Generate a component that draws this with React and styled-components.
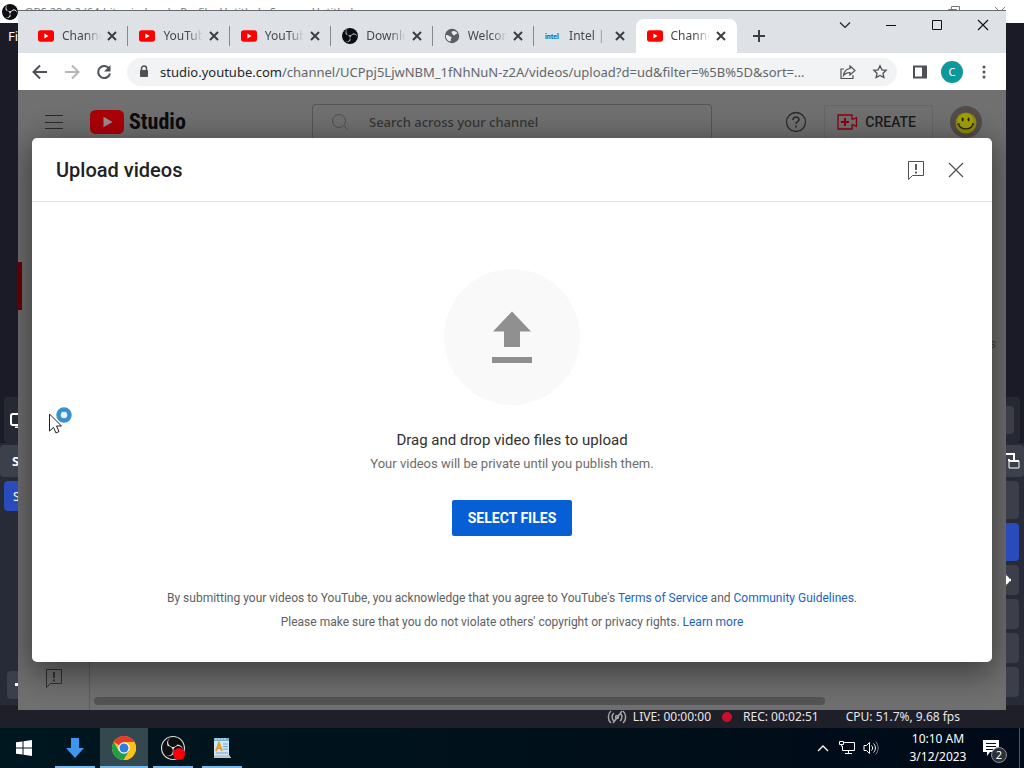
import React, { useState } from "react";
import styled, { createGlobalStyle } from "styled-components";
import { SiObsstudio } from "react-icons/si";

const GlobalStyle = createGlobalStyle`
  * {
    box-sizing: border-box;
  }
  body {
    margin: 0;
    overflow: hidden;
    font-family: "Noto Sans", "Open Sans", sans-serif;
  }
  button {
    padding: 0;
    border: none;
    background: none;
    color: inherit;
    font-family: inherit;
  }
  svg {
    display: block;
    flex: none;
  }
`;

/* ---------- desktop ---------- */

const Desktop = styled.div`
  display: flex;
  flex-direction: column;
  height: 100vh;
`;

const Workspace = styled.div`
  position: relative;
  flex: 1;
  min-height: 0;
  display: flex;
  flex-direction: column;
  overflow: hidden;
  background: #1a1b26;
`;

/* ---------- OBS window ---------- */

const ObsTitle = styled.div`
  display: flex;
  align-items: center;
  gap: 7px;
  height: 23px;
  padding: 0 18px 0 2px;
  background: #fff;
  color: #777;
  font-size: 11px;
  white-space: nowrap;
`;

const ObsTitleButtons = styled.div`
  display: flex;
  gap: 34px;
  margin-left: auto;
`;

const ObsMenu = styled.div`
  height: 26px;
  padding-left: 8px;
  color: #fff;
  font-size: 13px;
  line-height: 26px;
`;

const ObsPreview = styled.div`
  flex: 1;
`;

const ObsToolbar = styled.div`
  display: flex;
  align-items: center;
  justify-content: space-between;
  height: 46px;
  margin: 0 4px;
  padding: 0 6px;
  border-radius: 4px;
  background: #272932;
`;

const ObsToolButton = styled.div`
  width: 80px;
  height: 28px;
  border-radius: 4px;
  background: #3c3d47;
`;

const ObsDocks = styled.div`
  display: flex;
  justify-content: space-between;
  height: 262px;
  background: #272a37;
`;

const ObsDock = styled.div`
  display: flex;
  flex-direction: column;
  width: 200px;
`;

const ObsDockTitle = styled.div`
  display: flex;
  align-items: center;
  justify-content: ${props => (props.$end ? "flex-end" : "flex-start")};
  height: 32px;
  margin-top: 2px;
  padding: 0 4px 0 12px;
  border-radius: 4px;
  background: #3c404b;
  color: #fff;
  font-size: 13px;
  font-weight: 700;
`;

const ObsDockBody = styled.div`
  display: flex;
  flex-direction: column;
  gap: 4px;
  flex: 1;
  padding: 4px 5px 6px 4px;
`;

const ObsRow = styled.div`
  display: flex;
  align-items: center;
  justify-content: ${props => (props.$end ? "flex-end" : "flex-start")};
  height: ${props => (props.$tall ? 38 : 30)}px;
  padding-left: 9px;
  padding-right: 8px;
  border-radius: 4px;
  background: ${props => (props.$active ? "#2a4bbb" : "#3c3e4a")};
  color: #fff;
  font-size: 12px;
`;

const ObsDockFooter = styled.div`
  height: 28px;
  margin: auto 0 0 3px;
  padding: 12px 8px;
  border-radius: 4px;
  background: #3c3e4a;
`;

const ObsStatus = styled.div`
  display: flex;
  align-items: center;
  justify-content: flex-end;
  height: 23px;
  padding-right: 64px;
  background: #1e1f29;
  color: #e6e6e8;
  font-size: 12px;
  line-height: 22px;
`;

const StatusItem = styled.span`
  display: flex;
  align-items: center;
  gap: ${props => props.$gap || 6}px;
  margin-left: ${props => props.$space || 0}px;
`;

const RecDot = styled.i`
  width: 10px;
  height: 10px;
  border-radius: 50%;
  background: #c8102e;
`;

/* ---------- browser window ---------- */

const Browser = styled.section`
  position: absolute;
  inset: 10px 18px 18px 18px;
  display: flex;
  flex-direction: column;
  border-top: 1px solid #6a6b6e;
`;

const TabStrip = styled.div`
  display: flex;
  align-items: flex-end;
  height: 42px;
  padding-left: 9px;
  background: #dee1e6;
`;

const TabList = styled.div`
  display: flex;
  flex: 0 1 710px;
  min-width: 0;
`;

const Tab = styled.div`
  position: relative;
  display: flex;
  align-items: center;
  flex: 1 1 0;
  min-width: 0;
  height: 34px;
  padding: 0 8px 0 11px;
  border-radius: 8px 8px 0 0;
  background: ${props => (props.$active ? "#fff" : "transparent")};

  &:after {
    content: "";
    position: absolute;
    right: 0;
    top: 7px;
    width: 1px;
    height: 20px;
    background: ${props => (props.$divider ? "#85888c" : "transparent")};
  }
`;

const TabTitle = styled.span`
  flex: 1;
  min-width: 0;
  overflow: hidden;
  margin: 0 3px 0 8px;
  color: #45494d;
  font-size: 12px;
  line-height: 20px;
  white-space: nowrap;
  mask-image: linear-gradient(to right, #000 60%, transparent 100%);
`;

const IconButton = styled.button`
  display: flex;
  align-items: center;
  justify-content: center;
  flex: none;
  width: ${props => props.$w || 32}px;
  height: ${props => props.$h || 28}px;
  color: ${props => props.$color || "#4d5156"};
`;

const WindowButtons = styled.div`
  display: flex;
  align-self: flex-start;
  margin-left: auto;
`;

const Toolbar = styled.div`
  display: flex;
  align-items: center;
  height: 37px;
  padding: 0 6px;
  background: #fff;
`;

const AddressBar = styled.div`
  display: flex;
  align-items: center;
  flex: 1;
  min-width: 0;
  height: 28px;
  margin: 0 7px;
  padding: 0 1px 0 11px;
  border-radius: 14px;
  background: #f1f3f4;
`;

const Address = styled.div`
  flex: 1;
  min-width: 0;
  margin-left: 10px;
  color: #63676b;
  font-size: 13px;
  line-height: 20px;
  overflow: hidden;
  white-space: nowrap;

  b {
    color: #25282b;
    font-weight: 400;
  }
`;

const Profile = styled.button`
  width: 22px;
  height: 22px;
  margin: 0 5px;
  border-radius: 50%;
  background: #0d989c;
  color: #fff;
  font-size: 11px;
  line-height: 22px;
`;

/* ---------- studio page ---------- */

const Page = styled.main`
  position: relative;
  flex: 1;
  min-height: 0;
  display: flex;
  flex-direction: column;
  overflow: hidden;
  background: #707070;
  font-family: Roboto, sans-serif;
`;

const Header = styled.header`
  display: flex;
  align-items: center;
  height: 64px;
  padding: 0 24px 0 27px;
`;

const Logo = styled.a`
  display: flex;
  align-items: center;
  gap: 5px;
  width: 98px;
  margin-left: 27px;
  color: #0b0b0b;
  font-family: "Roboto Condensed", "Open Sans Condensed", Roboto, sans-serif;
  font-size: 22px;
  font-weight: 700;
  line-height: 28px;
  text-decoration: none;
`;

const Search = styled.label`
  display: flex;
  align-items: center;
  gap: 18px;
  flex: 0 1 400px;
  height: 36px;
  margin: 0 auto 0 124px;
  padding: 0 18px;
  border: 1px solid #565656;
  border-radius: 3px;
  color: #505050;

  input {
    flex: 1;
    min-width: 0;
    border: none;
    outline: none;
    background: none;
    font-family: "Noto Sans", sans-serif;
    font-size: 13px;
    font-weight: 500;
  }
  input::placeholder {
    color: #363636;
    opacity: 1;
  }
`;

const CreateButton = styled.button`
  display: flex;
  align-items: center;
  gap: 7px;
  height: 34px;
  margin: 0 17px;
  padding: 0 16px 0 12px;
  border: 1px solid #666;
  border-radius: 2px;
  color: #1c1c1c;
  font-size: 14px;
  font-weight: 500;
`;

const PageBody = styled.div`
  display: flex;
  flex: 1;
`;

const Sidebar = styled.nav`
  display: flex;
  flex-direction: column;
  justify-content: space-between;
  width: 72px;
  padding: 108px 0 22px;
  border-right: 1px solid #5d5d5d;
`;

const ActiveMark = styled.div`
  width: 4px;
  height: 48px;
  background: #6d0007;
`;

const SidebarIcon = styled.div`
  padding-left: 27px;
  color: #303030;
`;

const Content = styled.div`
  flex: 1;
  display: flex;
  flex-direction: column;
  justify-content: space-between;
  padding: 182px 10px 5px 4px;
  color: #444;
  font-size: 13px;
  line-height: 16px;
  text-align: right;
`;

const ScrollThumb = styled.div`
  width: 81%;
  height: 8px;
  border-radius: 4px;
  background: #545454;
`;

/* ---------- upload dialog ---------- */

const Dialog = styled.div`
  position: absolute;
  inset: 48px 14px;
  display: flex;
  flex-direction: column;
  border-radius: 5px;
  background: #fff;
  box-shadow: 0 8px 32px 4px rgba(0, 0, 0, 0.45);
`;

const DialogHeader = styled.div`
  display: flex;
  align-items: center;
  height: 64px;
  padding: 0 16px 0 24px;
  border-bottom: 1px solid #e3e3e3;

  h1 {
    flex: 1;
    margin: 0;
    color: #212121;
    font-size: 20px;
    font-weight: 500;
    line-height: 28px;
  }
`;

const DropArea = styled.div`
  display: flex;
  flex-direction: column;
  align-items: center;
  flex: 1;
  padding-top: 67px;
`;

const UploadCircle = styled.div`
  display: flex;
  align-items: center;
  justify-content: center;
  width: 136px;
  height: 136px;
  margin-bottom: 23px;
  border-radius: 50%;
  background: #f9f9f9;
`;

const DropTitle = styled.p`
  margin: 0;
  color: #303030;
  font-size: 15px;
  line-height: 24px;
`;

const DropText = styled.p`
  margin: 0 0 24px;
  color: #6c6c6c;
  font-size: 13px;
  line-height: 24px;
`;

const SelectButton = styled.button`
  height: 36px;
  padding: 0 16px;
  border-radius: 2px;
  background: #065fd4;
  color: #fff;
  font-size: 14px;
  font-weight: 700;
`;

const Legal = styled.div`
  padding-bottom: 28px;
  color: #606060;
  font-size: 12px;
  line-height: 24px;
  text-align: center;

  p {
    margin: 0;
  }
  a {
    color: #1a63c6;
    text-decoration: none;
  }
`;

/* ---------- taskbar ---------- */

const Taskbar = styled.footer`
  display: flex;
  height: 40px;
  background: linear-gradient(to right, #001720, #00121c 40%, #000a18);
  color: #fff;
`;

const TaskButton = styled.button`
  display: flex;
  align-items: center;
  justify-content: center;
  position: relative;
  width: 48px;
  margin-right: ${props => (props.$start ? 3 : 1)}px;
  background: ${props => (props.$active ? "#34484f" : "transparent")};

  &:after {
    content: "";
    position: absolute;
    bottom: 0;
    left: ${props => (props.$active ? 0 : 4)}px;
    right: ${props => (props.$active ? 0 : 4)}px;
    height: 2px;
    background: ${props => (props.$start ? "transparent" : "#76b9ed")};
  }
`;

const Tray = styled.div`
  display: flex;
  align-items: center;
  margin-left: auto;
`;

const Clock = styled.div`
  width: 74px;
  margin-left: 18px;
  font-size: 12px;
  line-height: 18px;
  text-align: center;
`;

const Notifications = styled.button`
  position: relative;
  display: flex;
  align-items: flex-start;
  width: 34px;
  height: 40px;
  padding: 12px 0 0 8px;
`;

const Badge = styled.span`
  position: absolute;
  right: 2px;
  bottom: 5px;
  width: 16px;
  height: 16px;
  border: 1px solid #8b9096;
  border-radius: 50%;
  background: #2a3038;
  font-size: 11px;
  line-height: 14px;
  text-align: center;
`;

const ShowDesktop = styled.div`
  width: 5px;
  height: 40px;
  margin-left: 10px;
  border-left: 1px solid #50565f;
`;

const Pointer = styled.div`
  position: absolute;
  top: 403px;
  left: 47px;
  pointer-events: none;
`;

/* ---------- icons ---------- */

const ObsDisc = styled.span`
  position: relative;
  display: flex;
  align-items: center;
  justify-content: center;
  flex: none;
  width: ${props => props.$size}px;
  height: ${props => props.$size}px;
  overflow: ${props => (props.$clip ? "hidden" : "visible")};
  border-radius: 50%;
  background: #0d0e12;
  color: ${props => props.$color};
`;

const RecordingDot = styled.i`
  position: absolute;
  right: 0;
  bottom: 0;
  width: 12px;
  height: 12px;
  border-radius: 50%;
  background: #fb0007;
`;

const ObsIcon = ({ size = 16, inner = 18, color = "#c8c8c8", dot }) => (
  <ObsDisc $size={size} $color={color} $clip={!dot}>
    <SiObsstudio size={inner} />
    {dot && <RecordingDot />}
  </ObsDisc>
);

const YouTubeIcon = ({ width = 16, height = 12, fill = "#f00", play = "#fff" }) => (
  <svg width={width} height={height} viewBox="0 0 34 24">
    <rect width="34" height="24" rx="5.5" fill={fill} />
    <path d="M13.5 6.8v10.4l9-5.2z" fill={play} />
  </svg>
);

const GlobeIcon = () => (
  <svg width="16" height="16" viewBox="0 0 16 16">
    <circle cx="8" cy="8" r="7.2" fill="#5b5f63" />
    <path
      d="M1.800 7.200c1.700-.3 2.700.2 3.600 1 .9.500 2 .3 2.200 1.200.1.900-1 1.200-.8 2.400l.1 1.500C4 13.200 1.600 11 1.800 7.200zM8.500 3.200c1.900-.9 4.200.3 5 2.300l-1.700.6c-.6.9-1.700 1.600-2.700 1.100-.7-.4-.2-1.300-.9-1.700-.9-.5-.8-1.700.3-2.300z"
      fill="#e8eaed"
    />
  </svg>
);

const IntelLogo = () => (
  <svg width="16" height="16" viewBox="0 0 16 16">
    <text x="0" y="11" fill="#0068b5" fontFamily="Lato, sans-serif" fontSize="7" fontWeight="900">
      intel
    </text>
  </svg>
);

const Cross = ({ size = 16, inset = 4, weight = 2 }) => (
  <svg width={size} height={size} viewBox={`0 0 ${size} ${size}`} stroke="currentColor" strokeWidth={weight}>
    <path d={`M${inset} ${inset}L${size - inset} ${size - inset}M${size - inset} ${inset}L${inset} ${size - inset}`} />
  </svg>
);

const LineIcon = ({ size = 16, d, weight = 1, children }) => (
  <svg
    width={size}
    height={size}
    viewBox={`0 0 ${size} ${size}`}
    fill="none"
    stroke="currentColor"
    strokeWidth={weight}
  >
    {d && <path d={d} />}
    {children}
  </svg>
);

const FeedbackIcon = () => (
  <svg width="18" height="20" viewBox="0 0 18 20" fill="none" stroke="currentColor">
    <path d="M1.500 1.500h15v14h-11l-4 4z" />
    <path d="M9 4v6M9 11.500v2" strokeWidth="1.800" />
  </svg>
);

const SmileyAvatar = () => (
  <svg width="32" height="32" viewBox="0 0 32 32">
    <circle cx="16" cy="16" r="16" fill="#544c4b" />
    <circle cx="16" cy="17" r="10.5" fill="#8f8c0c" />
    <circle cx="15.500" cy="15.500" r="8" fill="#a3a00a" />
    <ellipse cx="12.600" cy="13.500" rx="1" ry="2" fill="#222005" />
    <ellipse cx="18.600" cy="13.500" rx="1" ry="2" fill="#222005" />
    <path d="M8.500 18c2 6.500 12.500 6.500 14.500 0M7.500 18.500l2-1M22 17.500l2 1" fill="none" stroke="#222005" strokeWidth="1.200" />
  </svg>
);

const ChromeIcon = () => (
  <svg width="24" height="24" viewBox="0 0 24 24">
    <circle cx="12" cy="12" r="12" fill="#fbc116" />
    <path d="M12 12L1.600 6A12 12 0 0 1 22.400 6H12z" fill="#e33b2e" />
    <path d="M1.600 6A12 12 0 0 0 11.500 24l5.700-9L12 12l-5.200 3z" fill="#1f9d4d" />
    <path d="M22.400 6H12v6l5.200 3-5.500 9A12 12 0 0 0 22.400 6z" fill="#fbc116" />
    <circle cx="12" cy="12" r="5.800" fill="#fff" />
    <circle cx="12" cy="12" r="4.500" fill="#2f7be0" />
  </svg>
);

const NotepadIcon = () => (
  <svg width="20" height="22" viewBox="0 0 20 22">
    <path d="M2 1h15v17l2 3H2z" fill="#d3e6f2" />
    <path d="M2 1h15v3H2z" fill="#6fb1d6" />
    <path d="M4 1v2M7 1v2M10 1v2M13 1v2" stroke="#d9edf7" />
    <path d="M4 14L7 6l3 8M5 11h4" fill="none" stroke="#e59a32" strokeWidth="2" />
    <path d="M11 7h5M11 9.500h5M11 12h5M4 16h12" stroke="#6aa5cf" />
    <path d="M2 18h15l2 3H2z" fill="#b9c8d1" />
  </svg>
);

const tabs = [
  { title: "Channel content", icon: <YouTubeIcon /> },
  { title: "YouTube", icon: <YouTubeIcon /> },
  { title: "YouTube", icon: <YouTubeIcon /> },
  { title: "Download", icon: <ObsIcon /> },
  { title: "Welcome", icon: <GlobeIcon /> },
  { title: "Intel | Data", icon: <IntelLogo /> },
  { title: "Channel content", icon: <YouTubeIcon />, active: true }
];

const ObsWindow = () => (
  <>
    <ObsTitle>
      <ObsIcon color="#fff" />
      <span>OBS 29.0.2 (64-bit, windows) - Profile: Untitled - Scenes: Untitled</span>
      <ObsTitleButtons>
        <LineIcon size={12} d="M3.5 3V.5h8v8H9M.5 3.500h8v8h-8z" />
        <Cross size={12} inset={1} weight={1} />
      </ObsTitleButtons>
    </ObsTitle>
    <ObsMenu>File</ObsMenu>
    <ObsPreview />
    <ObsToolbar>
      <svg width="16" height="16" viewBox="0 0 16 16" fill="none" stroke="#fff" strokeWidth="2">
        <rect x="1" y="2" width="14" height="11" rx="2" />
        <path d="M5 15.500h6" />
      </svg>
      <ObsToolButton />
    </ObsToolbar>
    <ObsDocks>
      <ObsDock>
        <ObsDockTitle>Scenes</ObsDockTitle>
        <ObsDockBody>
          <ObsRow $active>Scene</ObsRow>
          <ObsDockFooter>
            <svg width="10" height="3" viewBox="0 0 10 3">
              <path d="M0 0h10v3H0z" fill="#fff" />
            </svg>
          </ObsDockFooter>
        </ObsDockBody>
      </ObsDock>
      <ObsDock>
        <ObsDockTitle $end>
          <svg width="18" height="16" viewBox="0 0 18 16" fill="none" stroke="#fff">
            <path d="M7 8V6M1 1h11v6" strokeWidth="2" />
            <path d="M7 8h10v7H7z" />
            <path d="M7 8h10" strokeWidth="2" />
          </svg>
        </ObsDockTitle>
        <ObsDockBody>
          <ObsRow $tall />
          <ObsRow $tall $active />
          <ObsRow $end>
            <svg width="12" height="12" viewBox="0 0 12 12">
              <circle cx="6" cy="6" r="3" fill="none" stroke="#fff" strokeWidth="3" />
              <path d="M6 0v12M0 6h12" stroke="#fff" strokeWidth="2.500" />
            </svg>
          </ObsRow>
          <ObsRow />
          <ObsRow />
          <ObsRow />
        </ObsDockBody>
      </ObsDock>
    </ObsDocks>
    <ObsStatus>
      <StatusItem>
        <svg width="20" height="14" viewBox="0 0 20 14" fill="none" stroke="#a4a5aa" strokeWidth="1.500">
          <path d="M4 1C.5 4 .5 10 4 13M7 3C4.500 5 4.500 9 7 11M16 1c3.500 3 3.500 9 0 12M13 3c2.500 2 2.500 6 0 8M6 13L15 1" />
          <circle cx="10" cy="7" r="1.500" />
        </svg>
        LIVE: 00:00:00
      </StatusItem>
      <StatusItem $space={11} $gap={11}>
        <RecDot />
        REC: 00:02:51
      </StatusItem>
      <StatusItem $space={27}>CPU: 51.7%, 9.68 fps</StatusItem>
    </ObsStatus>
  </>
);

const UploadDialog = () => (
  <Dialog role="dialog" aria-labelledby="upload-title">
    <DialogHeader>
      <h1 id="upload-title">Upload videos</h1>
      <IconButton $w={40} $color="#505050" aria-label="Send feedback">
        <FeedbackIcon />
      </IconButton>
      <IconButton $w={40} $color="#505050" aria-label="Close">
        <Cross size={18} inset={2} weight={1.2} />
      </IconButton>
    </DialogHeader>
    <DropArea>
      <UploadCircle>
        <svg width="40" height="52" viewBox="0 0 40 52" fill="#909090">
          <path d="M20 .500l19 20H28V36H12V20.500H1zM0 46h40v6H0z" />
        </svg>
      </UploadCircle>
      <DropTitle>Drag and drop video files to upload</DropTitle>
      <DropText>Your videos will be private until you publish them.</DropText>
      <SelectButton>SELECT FILES</SelectButton>
    </DropArea>
    <Legal>
      <p>
        By submitting your videos to YouTube, you acknowledge that you agree to
        YouTube's <a href="#terms">Terms of Service</a> and{" "}
        <a href="#guidelines">Community Guidelines</a>.
      </p>
      <p>
        Please make sure that you do not violate others' copyright or privacy
        rights. <a href="#learn">Learn more</a>
      </p>
    </Legal>
  </Dialog>
);

const StudioPage = () => {
  const [query, setQuery] = useState("");

  return (
    <Page>
      <Header>
        <IconButton $w={18} $color="#2b2b2b" aria-label="Menu">
          <LineIcon size={18} d="M0 2.500h18M0 9.500h18M0 15.500h18" />
        </IconButton>
        <Logo href="#studio">
          <YouTubeIcon width={34} height={24} fill="#ac0009" play="#9a8f8f" />
          Studio
        </Logo>
        <Search>
          <LineIcon size={18} d="M12.500 12.500L17 17">
            <circle cx="8" cy="8" r="6.500" />
          </LineIcon>
          <input
            type="text"
            aria-label="Search"
            placeholder="Search across your channel"
            value={query}
            onChange={e => setQuery(e.target.value)}
          />
        </Search>
        <IconButton $w={22} $color="#2c2c2c" aria-label="Help">
          <LineIcon size={22} weight={1.3}>
            <circle cx="11" cy="11" r="9.500" />
            <path d="M8 9c0-4 6-4 6-.500 0 2.200-3 2.200-3 4.500M11 14.500v2" strokeWidth="1.600" />
          </LineIcon>
        </IconButton>
        <CreateButton>
          <svg width="21" height="16" viewBox="0 0 21 16" fill="none" stroke="#8a0010">
            <path d="M1 1h14v4h1.500l3-1.500v9l-3-1.500H15v4H1z" strokeWidth="1.300" />
            <path d="M8 4v8M4 8h8" strokeWidth="2" />
          </svg>
          CREATE
        </CreateButton>
        <SmileyAvatar />
      </Header>
      <PageBody>
        <Sidebar>
          <ActiveMark />
          <SidebarIcon>
            <FeedbackIcon />
          </SidebarIcon>
        </Sidebar>
        <Content>
          <span>s</span>
          <ScrollThumb />
        </Content>
      </PageBody>
      <UploadDialog />
    </Page>
  );
};

const BrowserWindow = () => (
  <Browser>
    <TabStrip>
      <TabList>
        {tabs.map((tab, i) => (
          <Tab key={i} $active={tab.active} $divider={i < 5}>
            {tab.icon}
            <TabTitle>{tab.title}</TabTitle>
            <IconButton $w={16} $h={16} $color="#3c4043" aria-label="Close tab">
              <Cross />
            </IconButton>
          </Tab>
        ))}
      </TabList>
      <IconButton $w={44} $h={34} $color="#3c4043" aria-label="New tab">
        <LineIcon size={12} weight={2} d="M6 0v12M0 6h12" />
      </IconButton>
      <WindowButtons>
        <IconButton $w={46} $color="#222" aria-label="Search tabs">
          <LineIcon size={12} d="M1 3.500l5 5 5-5" weight={1.2} />
        </IconButton>
        <IconButton $w={46} $color="#111" aria-label="Minimize">
          <LineIcon size={10} d="M0 5.500h10" />
        </IconButton>
        <IconButton $w={46} $color="#111" aria-label="Maximize">
          <LineIcon size={10} d="M.5.5h9v9h-9z" />
        </IconButton>
        <IconButton $w={46} $color="#111" aria-label="Close window">
          <Cross size={12} inset={1} weight={1.1} />
        </IconButton>
      </WindowButtons>
    </TabStrip>
    <Toolbar>
      <IconButton aria-label="Back">
        <LineIcon weight={2} d="M15 8H2M8 1.500L1.500 8 8 14.500" />
      </IconButton>
      <IconButton $color="#b4b6b9" aria-label="Forward">
        <LineIcon weight={2} d="M1 8h13M8 1.500L14.500 8 8 14.500" />
      </IconButton>
      <IconButton aria-label="Reload">
        <LineIcon weight={2} d="M13 4.500A6 6 0 1 0 14 9.500">
          <path d="M14.500 1v6.500H8z" fill="currentColor" stroke="none" />
        </LineIcon>
      </IconButton>
      <AddressBar>
        <svg width="12" height="14" viewBox="0 0 12 14">
          <rect x="2" y="5" width="8" height="7" rx="1" fill="#4d5156" />
          <path d="M3.500 5.500v-2a2.500 2.500 0 0 1 5 0v2" fill="none" stroke="#4d5156" strokeWidth="1.500" />
        </svg>
        <Address>
          <b>studio.youtube.com</b>
          /channel/UCPpj5LjwNBM_1fNhNuN-z2A/videos/upload?d=ud&amp;filter=%5B%5D&amp;sort=...
        </Address>
        <IconButton aria-label="Share">
          <LineIcon weight={1.2} d="M4 5H1v9.500h12V11M10 2l5 4.500-5 4.500V8.500C7 8.500 5 9.500 3.500 11.500 4 7.500 6.500 5 10 4.500z" />
        </IconButton>
        <IconButton aria-label="Bookmark">
          <LineIcon
            weight={1.3}
            d="M8 1.800l1.900 4 4.300.500-3.200 3 .9 4.300L8 11.500l-3.900 2.100.9-4.300-3.200-3 4.300-.500z"
          />
        </IconButton>
      </AddressBar>
      <IconButton aria-label="Side panel">
        <LineIcon weight={2} d="M2 2.500h12v11H2z">
          <path d="M10 3h4v10h-4z" fill="currentColor" stroke="none" />
        </LineIcon>
      </IconButton>
      <Profile>C</Profile>
      <IconButton aria-label="More">
        <svg width="4" height="16" viewBox="0 0 4 16" fill="currentColor">
          <circle cx="2" cy="3" r="1.500" />
          <circle cx="2" cy="8" r="1.500" />
          <circle cx="2" cy="13" r="1.500" />
        </svg>
      </IconButton>
    </Toolbar>
    <StudioPage />
  </Browser>
);

const WindowsTaskbar = () => (
  <Taskbar>
    <TaskButton $start aria-label="Start">
      <svg width="16" height="16" viewBox="0 0 16 16" fill="#fff">
        <path d="M0 2.300l6.500-.9v6.100H0zM7.500 1.200L16 0v7.500H7.500zM0 8.500h6.500v6.100L0 13.700zM7.500 8.500H16V16l-8.500-1.200z" />
      </svg>
    </TaskButton>
    <TaskButton aria-label="Downloads">
      <svg width="18" height="20" viewBox="0 0 18 20">
        <path d="M5 0h8v10h5l-9 10-9-10h5z" fill="#3e96ee" />
      </svg>
    </TaskButton>
    <TaskButton $active aria-label="Chrome">
      <ChromeIcon />
    </TaskButton>
    <TaskButton aria-label="OBS Studio">
      <ObsIcon size={24} inner={24} color="#e0e0e0" dot />
    </TaskButton>
    <TaskButton aria-label="WordPad">
      <NotepadIcon />
    </TaskButton>
    <Tray>
      <IconButton $w={24} $color="#fff" aria-label="Hidden icons">
        <LineIcon size={12} d="M1 9l5-5 5 5" weight={1.3} />
      </IconButton>
      <IconButton $w={24} $color="#fff" aria-label="Network">
        <LineIcon d="M5 2.500h10.500v8H3.500V6M9.500 10.500v3M6 13.500h7M.5 1.500h4v3h-4zM2.500 4.500v2" />
      </IconButton>
      <IconButton $w={24} $color="#fff" aria-label="Volume">
        <LineIcon d="M1 5.500h2.500l3-3v11l-3-3H1zM8.500 5.500c1.500 1.500 1.500 3.500 0 5M10.500 3.500c2.500 2.500 2.500 6.500 0 9">
          <path d="M12.500 1.500c3.500 3.500 3.500 9.500 0 13" stroke="#7c828a" />
        </LineIcon>
      </IconButton>
      <Clock>
        10:10 AM
        <br />
        3/12/2023
      </Clock>
      <Notifications aria-label="Notifications">
        <svg width="16" height="16" viewBox="0 0 16 16">
          <path d="M0 0h16v12H7l-3 4v-4H0z" fill="#fff" />
          <path d="M3 3.500h10M3 6.500h10M3 9.500h7" stroke="#04101c" />
        </svg>
        <Badge>2</Badge>
      </Notifications>
      <ShowDesktop />
    </Tray>
  </Taskbar>
);

const App = () => (
  <Desktop>
    <GlobalStyle />
    <Workspace>
      <ObsWindow />
      <BrowserWindow />
      <Pointer>
        <svg width="30" height="34" viewBox="0 0 30 34">
          <circle cx="17" cy="12" r="5.500" fill="#e3f4ff" stroke="#3a90cf" strokeWidth="4.500" />
          <path
            d="M2.500 11v17l4-3.500 2.500 5.500 3-1.500-2.500-5.500h5z"
            fill="#fff"
            stroke="#222"
          />
        </svg>
      </Pointer>
    </Workspace>
    <WindowsTaskbar />
  </Desktop>
);

export default App;
